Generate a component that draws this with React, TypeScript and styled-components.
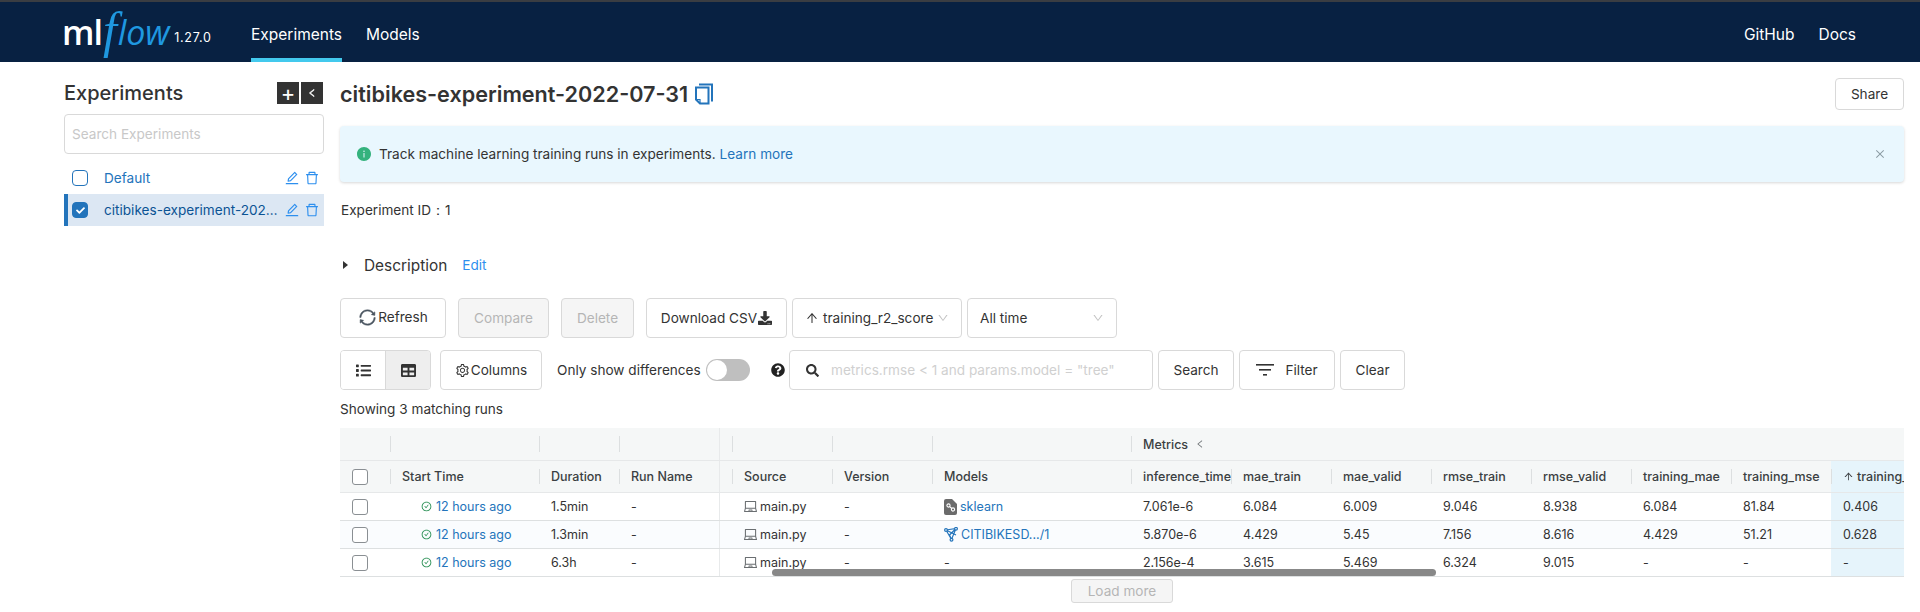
import React from "react";
import styled, { createGlobalStyle } from "styled-components";
import {
  AiFillInfoCircle,
  AiOutlineCheckCircle,
  AiOutlineClose,
  AiOutlineDelete,
  AiOutlineDown,
  AiOutlineEdit,
  AiOutlineLaptop,
  AiOutlineSetting,
  AiOutlineArrowUp,
  AiOutlineLeft,
  AiOutlineSync,
} from "react-icons/ai";
import { FaDownload, FaList, FaQuestionCircle, FaSearch, FaTable, FaCheck } from "react-icons/fa";

const Global = createGlobalStyle`
  html, body { margin: 0; padding: 0; height: 612px; overflow: hidden; background: #fff; }
  body { font-family: Inter, "Liberation Sans", sans-serif; font-size: 13.6px; color: #333; }
  * { box-sizing: border-box; }
`;

const Page = styled.div`
  width: 1920px;
  height: 612px;
  display: flex;
  flex-direction: column;
  overflow: hidden;
`;

const Header = styled.header`
  flex: none;
  height: 62px;
  background: #082142;
  border-top: 2px solid #3a3d42;
  display: flex;
  padding: 0 64px;
  color: #fff;
`;

const Logo = styled.div`
  display: flex;
  align-items: center;
  width: 189px;
  margin-left: -2px;
`;

const LogoMl = styled.span`
  font-family: "Open Sans", sans-serif;
  font-size: 34px;
  font-weight: 600;
  letter-spacing: -1px;
  line-height: 1;
`;

const LogoFlow = styled.span`
  font-family: "Open Sans", sans-serif;
  font-size: 34px;
  font-style: italic;
  font-weight: 500;
  color: #1f98e0;
  line-height: 1;
  letter-spacing: -0.2px;
`;

const LogoF = styled.span`
  font-family: "Liberation Serif", serif;
  font-size: 50px;
  font-style: italic;
  font-weight: 400;
  color: #1f98e0;
  line-height: 1;
  margin: -4px 1px 0 1px;
`;

const Version = styled.span`
  font-size: 12.5px;
  letter-spacing: 0.7px;
  margin: 11px 0 0 5px;
`;

const NavLink = styled.a<{ $active?: boolean; $last?: boolean }>`
  display: flex;
  align-items: center;
  height: 60px;
  font-size: 15.5px;
  padding-top: 8px;
  color: #fff;
  border-bottom: 4px solid ${(p) => (p.$active ? "#43c9ed" : "transparent")};
  margin-right: ${(p) => (p.$last ? 0 : 24)}px;
`;

const Spacer = styled.div`
  flex: 1;
`;

const Body = styled.div`
  flex: 1;
  display: flex;
  padding: 16px 16px 0 64px;
  gap: 16px;
  min-height: 0;
`;

const Sidebar = styled.aside`
  flex: none;
  width: 260px;
`;

const SideHead = styled.div`
  display: flex;
  align-items: center;
  height: 28px;
  margin-top: 1px;
  margin-bottom: 7px;
`;

const SideTitle = styled.div`
  flex: 1;
  font-size: 20px;
  font-weight: 500;
  color: #333;
`;

const SquareBtn = styled.div`
  width: 22px;
  height: 22px;
  background: #333;
  color: #fff;
  display: flex;
  align-items: center;
  justify-content: center;
  margin-left: 2px;
  font-size: 22px;
  line-height: 1;
  &:last-child { margin-right: 1px; }
`;

const SideSearch = styled.div`
  height: 40px;
  border: 1px solid #d9d9d9;
  border-radius: 4px;
  display: flex;
  align-items: center;
  padding: 0 7px;
  color: #c8c8c8;
  margin-bottom: 8px;
`;

const ExpRow = styled.div<{ $selected?: boolean }>`
  height: 32px;
  display: flex;
  align-items: center;
  padding-left: ${(p) => (p.$selected ? "4px" : "8px")};
  background: ${(p) => (p.$selected ? "#dce7f3" : "transparent")};
  border-left: ${(p) => (p.$selected ? "4px solid #2374bb" : "0")};
  color: ${(p) => (p.$selected ? "#0b5394" : "#2374bb")};
`;

const ExpCheck = styled.span<{ $checked?: boolean }>`
  flex: none;
  width: 16px;
  height: 16px;
  border-radius: 4px;
  border: 1px solid #2374bb;
  background: ${(p) => (p.$checked ? "#2374bb" : "#fff")};
  color: #fff;
  display: flex;
  align-items: center;
  justify-content: center;
  font-size: 9px;
`;

const ExpName = styled.span`
  flex: none;
  width: 177px;
  margin-left: 16px;
  white-space: nowrap;
  overflow: hidden;
  text-overflow: ellipsis;
`;

const ExpIcons = styled.span`
  display: flex;
  align-items: center;
  gap: 4px;
  margin-left: 3px;
  font-size: 16px;
  color: #2d8fee;
`;

const Main = styled.main`
  flex: 1;
  min-width: 0;
`;

const TitleRow = styled.div`
  display: flex;
  align-items: center;
  height: 32px;
`;

const Title = styled.h1`
  margin: 0;
  font-size: 21.6px;
  font-weight: 600;
  color: #333;
  white-space: nowrap;
`;

const CopyIcon = styled.svg`
  width: 20px;
  height: 22px;
  margin-left: 6px;
  flex: none;
`;

const Btn = styled.div<{ $disabled?: boolean; $w: number; $ml?: number }>`
  flex: none;
  width: ${(p) => p.$w}px;
  margin-left: ${(p) => p.$ml ?? 0}px;
  height: 40px;
  border: 1px solid #d9d9d9;
  border-radius: 4px;
  background: ${(p) => (p.$disabled ? "#f5f5f5" : "#fff")};
  color: ${(p) => (p.$disabled ? "#b5b5b5" : "#333")};
  display: flex;
  align-items: center;
  justify-content: center;
  gap: 1px;
  white-space: nowrap;
`;

const ShareBtn = styled(Btn)`
  height: 32px;
  margin-left: auto;
`;

const RefreshBtn = styled(Btn)`
  gap: 1px;
  padding-bottom: 2px;
  svg { color: #4a5560; stroke: currentColor; stroke-width: 24; }
`;

const Alert = styled.div`
  height: 56px;
  margin-top: 16px;
  background: #e9f7fe;
  border-radius: 4px;
  box-shadow: 0 1px 3px rgba(0, 0, 0, 0.16);
  display: flex;
  align-items: center;
  padding: 0 18px 0 16px;
  color: #333;
`;

const AlertIcon = styled.span`
  display: flex;
  font-size: 16px;
  color: #34b27d;
  margin-right: 7px;
`;

const Link = styled.a`
  color: #2374bb;
`;

const AlertLink = styled(Link)`
  margin-left: 4px;
`;

const AlertClose = styled.span`
  margin-left: auto;
  display: flex;
  color: #8a9aa3;
  font-size: 12px;
`;

const ExpId = styled.div`
  margin-top: 18px;
  line-height: 20px;
  padding-left: 1px;
`;

const DescRow = styled.div`
  display: flex;
  align-items: center;
  height: 24px;
  margin-top: 33px;
  padding-left: 3px;
`;

const Caret = styled.span`
  width: 0;
  height: 0;
  border-left: 5px solid #333;
  border-top: 4px solid transparent;
  border-bottom: 4px solid transparent;
`;

const DescText = styled.span`
  font-size: 15.4px;
  margin-left: 16px;
`;

const DescEdit = styled.span`
  color: #2d8fee;
  margin-left: 15px;
`;

const Toolbar = styled.div<{ $top: number }>`
  display: flex;
  align-items: center;
  margin-top: ${(p) => p.$top}px;
`;

const Select = styled.div<{ $w: number; $ml: number }>`
  flex: none;
  width: ${(p) => p.$w}px;
  margin-left: ${(p) => p.$ml}px;
  height: 40px;
  border: 1px solid #d9d9d9;
  border-radius: 4px;
  display: flex;
  align-items: center;
  padding: 0 12px;
  gap: 4px;
  white-space: nowrap;
`;

const SelectValue = styled.span`
  flex: 1;
  display: flex;
  align-items: center;
  gap: 4px;
`;

const Chevron = styled.span`
  display: flex;
  font-size: 12px;
  color: #c2c2c2;
`;

const ViewToggle = styled.div`
  flex: none;
  width: 91px;
  height: 40px;
  border: 1px solid #d9d9d9;
  border-radius: 4px;
  display: flex;
  overflow: hidden;
`;

const ViewCell = styled.div<{ $active?: boolean }>`
  flex: 1;
  display: flex;
  align-items: center;
  justify-content: center;
  font-size: 15px;
  background: ${(p) => (p.$active ? "#eee" : "#fff")};
  border-left: ${(p) => (p.$active ? "1px solid #d9d9d9" : "0")};
  color: #333;
`;

const DiffLabel = styled.span`
  white-space: nowrap;
  margin-left: 15px;
  width: 144px;
`;

const Toggle = styled.span`
  flex: none;
  width: 44px;
  height: 22px;
  margin-left: 5px;
  border-radius: 11px;
  background: #bfbfbf;
  display: flex;
  align-items: center;
  padding-left: 1px;
`;

const Knob = styled.span`
  width: 20px;
  height: 20px;
  border-radius: 50%;
  background: #fff;
`;

const HelpIcon = styled.span`
  display: flex;
  font-size: 14px;
  margin-left: 21px;
  color: #222;
`;

const SearchBox = styled.div`
  flex: none;
  width: 364px;
  height: 40px;
  margin-left: 4px;
  margin-right: 5px;
  border: 1px solid #d9d9d9;
  border-radius: 4px;
  display: flex;
  align-items: center;
  padding: 0 16px;
  gap: 12px;
  color: #333;
  font-size: 13px;
`;

const SearchHint = styled.span`
  font-size: 13.6px;
  color: #d0d0d0;
  white-space: nowrap;
`;

const FilterBtn = styled(Btn)`
  gap: 11px;
  margin: 0 5px;
`;

const Count = styled.div`
  margin-top: 9px;
  line-height: 20px;
`;

const Grid = styled.div`
  position: relative;
  margin-top: 9px;
  width: 1564px;
  overflow: hidden;
`;

const GridRow = styled.div<{ $kind: "group" | "head" | "cell"; $alt?: boolean }>`
  display: flex;
  width: 1700px;
  height: ${(p) => (p.$kind === "cell" ? 28 : p.$kind === "group" ? 33 : 32)}px;
  align-items: stretch;
  background: ${(p) => (p.$kind === "cell" ? (p.$alt ? "#fafcfe" : "#fff") : "#f5f7f7")};
  border-bottom: 1px solid ${(p) => (p.$kind === "cell" ? "#dde0e1" : "#e6e8e9")};
  font-size: 12.5px;
  font-weight: ${(p) => (p.$kind === "cell" ? 400 : 500)};
  color: ${(p) => (p.$kind === "cell" ? "#333" : "#3b3f42")};
`;

const Col = styled.div<{ $w: number; $sep?: boolean; $edge?: boolean; $sorted?: boolean }>`
  flex: none;
  position: relative;
  width: ${(p) => p.$w}px;
  display: flex;
  align-items: center;
  padding-left: 12px;
  white-space: nowrap;
  overflow: hidden;
  background: ${(p) => (p.$sorted ? "#e6f4fb" : "transparent")};
  border-right: ${(p) => (p.$edge ? "1px solid #e8eaeb" : "0")};
  &::before {
    content: ${(p) => (p.$sep ? '""' : "none")};
    position: absolute;
    left: 0;
    top: 8px;
    bottom: 8px;
    width: 1px;
    background: #dcdfe0;
  }
`;

const RowCheck = styled.span`
  width: 16px;
  height: 16px;
  border: 1px solid #8a8f93;
  border-radius: 3px;
  background: #fff;
`;

const StartCell = styled.span`
  display: flex;
  align-items: center;
  gap: 4px;
  margin-left: 19px;
  color: #2374bb;
`;

const StatusIcon = styled.span`
  display: flex;
  font-size: 11px;
  color: #1f8a4c;
`;

const SourceCell = styled.span`
  display: flex;
  align-items: center;
  gap: 2px;
  margin-left: -1px;
`;

const LaptopIcon = styled.span`
  display: flex;
  font-size: 15px;
  color: #6a6e71;
`;

const ModelLink = styled.span`
  display: flex;
  align-items: center;
  gap: 3px;
  color: #2374bb;
`;

const GroupLabel = styled.span`
  display: flex;
  align-items: center;
  gap: 7px;
  font-size: 12.5px;
`;

const GroupChevron = styled.span`
  display: flex;
  font-size: 10px;
  color: #6d7275;
`;

const Scrollbar = styled.div`
  position: absolute;
  left: 432px;
  bottom: 1px;
  width: 664px;
  height: 7px;
  border-radius: 4px;
  background: #888;
`;

const LoadRow = styled.div`
  width: 1564px;
  display: flex;
  justify-content: center;
  margin-top: 2px;
`;

const LoadBtn = styled.div`
  width: 102px;
  height: 24px;
  border: 1px solid #d9d9d9;
  border-radius: 3px;
  background: #f5f5f5;
  color: #b5b5b5;
  display: flex;
  align-items: center;
  justify-content: center;
`;

const SortedHead = styled.span`
  display: flex;
  align-items: center;
  gap: 3px;
`;

const CopyGlyph = () => (
  <CopyIcon viewBox="0 0 20 22" fill="none" stroke="#2374bb" strokeWidth="2">
    <path d="M5 1.5h13v17" />
    <path d="M2 4.5h12.5v16H6l-4-4z" />
    <path d="M2 16.5h4v4" strokeWidth="1.2" />
  </CopyIcon>
);

const SklearnIcon = () => (
  <svg width="13" height="16" viewBox="0 0 13 16">
    <path d="M2 0h6l5 5v9a2 2 0 0 1-2 2H2a2 2 0 0 1-2-2V2a2 2 0 0 1 2-2z" fill="#6b6b6b" />
    <g fill="none" stroke="#fff" strokeWidth="1.1">
      <circle cx="4.5" cy="6.5" r="1.6" />
      <circle cx="9" cy="10.5" r="1.6" />
      <path d="M5.7 7.6l2.1 1.9" />
    </g>
  </svg>
);

const RegisteredIcon = () => (
  <svg width="14" height="15" viewBox="0 0 14 15" fill="none" stroke="#2374bb" strokeWidth="1.2">
    <path d="M2 3l10-1.5L7.5 12.5zM2 3l10 5M12 1.5L5.5 8 7.5 12.5" />
    <circle cx="2" cy="3" r="1.4" fill="#fff" />
    <circle cx="12" cy="1.8" r="1.4" fill="#fff" />
    <circle cx="7.5" cy="12.8" r="1.4" fill="#fff" />
  </svg>
);

const FilterGlyph = () => (
  <svg width="18" height="12" viewBox="0 0 18 12" fill="#333">
    <rect x="0" y="0" width="18" height="1.6" />
    <rect x="3" y="5" width="12" height="1.6" />
    <rect x="7" y="10" width="4" height="1.6" />
  </svg>
);

type Column = { key: string; w: number; label: string };

const columns: Column[] = [
  { key: "select", w: 50, label: "" },
  { key: "start", w: 149, label: "Start Time" },
  { key: "duration", w: 80, label: "Duration" },
  { key: "runName", w: 101, label: "Run Name" },
  { key: "gap", w: 10, label: "" },
  { key: "source", w: 100, label: "Source" },
  { key: "version", w: 100, label: "Version" },
  { key: "models", w: 199, label: "Models" },
  { key: "inference", w: 100, label: "inference_time" },
  { key: "maeTrain", w: 100, label: "mae_train" },
  { key: "maeValid", w: 100, label: "mae_valid" },
  { key: "rmseTrain", w: 100, label: "rmse_train" },
  { key: "rmseValid", w: 100, label: "rmse_valid" },
  { key: "trainMae", w: 100, label: "training_mae" },
  { key: "trainMse", w: 100, label: "training_mse" },
];

const runs = [
  { duration: "1.5min", model: "sklearn", kind: "sk", m: ["7.061e-6", "6.084", "6.009", "9.046", "8.938", "6.084", "81.84"], r2: "0.406" },
  { duration: "1.3min", model: "CITIBIKESD.../1", kind: "reg", m: ["5.870e-6", "4.429", "5.45", "7.156", "8.616", "4.429", "51.21"], r2: "0.628" },
  { duration: "6.3h", model: "-", kind: "none", m: ["2.156e-4", "3.615", "5.469", "6.324", "9.015", "-", "-"], r2: "-" },
];

export default function App() {
  return (
    <Page>
      <Global />
      <Header>
        <Logo>
          <LogoMl>ml</LogoMl>
          <LogoF>f</LogoF>
          <LogoFlow>low</LogoFlow>
          <Version>1.27.0</Version>
        </Logo>
        <NavLink $active>Experiments</NavLink>
        <NavLink>Models</NavLink>
        <Spacer />
        <NavLink>GitHub</NavLink>
        <NavLink $last>Docs</NavLink>
      </Header>
      <Body>
        <Sidebar>
          <SideHead>
            <SideTitle>Experiments</SideTitle>
            <SquareBtn>+</SquareBtn>
            <SquareBtn>
              <AiOutlineLeft size={10} strokeWidth={60} />
            </SquareBtn>
          </SideHead>
          <SideSearch>Search Experiments</SideSearch>
          <ExpRow>
            <ExpCheck />
            <ExpName>Default</ExpName>
            <ExpIcons>
              <AiOutlineEdit />
              <AiOutlineDelete />
            </ExpIcons>
          </ExpRow>
          <ExpRow $selected>
            <ExpCheck $checked>
              <FaCheck />
            </ExpCheck>
            <ExpName>citibikes-experiment-2022-07-31</ExpName>
            <ExpIcons>
              <AiOutlineEdit />
              <AiOutlineDelete />
            </ExpIcons>
          </ExpRow>
        </Sidebar>
        <Main>
          <TitleRow>
            <Title>citibikes-experiment-2022-07-31</Title>
            <CopyGlyph />
            <ShareBtn $w={69}>Share</ShareBtn>
          </TitleRow>
          <Alert>
            <AlertIcon>
              <AiFillInfoCircle />
            </AlertIcon>
            Track machine learning training runs in experiments.
            <AlertLink>Learn more</AlertLink>
            <AlertClose>
              <AiOutlineClose />
            </AlertClose>
          </Alert>
          <ExpId>Experiment ID：1</ExpId>
          <DescRow>
            <Caret />
            <DescText>Description</DescText>
            <DescEdit>Edit</DescEdit>
          </DescRow>
          <Toolbar $top={21}>
            <RefreshBtn $w={106}>
              <AiOutlineSync size={19} />
              Refresh
            </RefreshBtn>
            <Btn $w={91} $disabled $ml={12}>
              Compare
            </Btn>
            <Btn $w={73} $disabled $ml={12}>
              Delete
            </Btn>
            <Btn $w={141} $ml={12}>
              Download CSV
              <FaDownload size={14} />
            </Btn>
            <Select $w={170} $ml={5}>
              <SelectValue>
                <AiOutlineArrowUp size={14} />
                training_r2_score
              </SelectValue>
              <Chevron>
                <AiOutlineDown />
              </Chevron>
            </Select>
            <Select $w={150} $ml={5}>
              <SelectValue>All time</SelectValue>
              <Chevron>
                <AiOutlineDown />
              </Chevron>
            </Select>
          </Toolbar>
          <Toolbar $top={12}>
            <ViewToggle>
              <ViewCell>
                <FaList />
              </ViewCell>
              <ViewCell $active>
                <FaTable />
              </ViewCell>
            </ViewToggle>
            <Btn $w={102} $ml={9}>
              <AiOutlineSetting size={15} />
              Columns
            </Btn>
            <DiffLabel>Only show differences</DiffLabel>
            <Toggle>
              <Knob />
            </Toggle>
            <HelpIcon>
              <FaQuestionCircle />
            </HelpIcon>
            <SearchBox>
              <FaSearch />
              <SearchHint>metrics.rmse &lt; 1 and params.model = "tree"</SearchHint>
            </SearchBox>
            <Btn $w={76}>Search</Btn>
            <FilterBtn $w={96}>
              <FilterGlyph />
              Filter
            </FilterBtn>
            <Btn $w={65}>Clear</Btn>
          </Toolbar>
          <Count>Showing 3 matching runs</Count>
          <Grid>
            <GridRow $kind="group">
              {columns.slice(0, 8).map((c, i) => (
                <Col key={c.key} $w={c.w} $sep={i > 0 && c.key !== "gap"} $edge={c.key === "runName"} />
              ))}
              <Col $w={800} $sep>
                <GroupLabel>
                  Metrics
                  <GroupChevron>
                    <AiOutlineLeft />
                  </GroupChevron>
                </GroupLabel>
              </Col>
            </GridRow>
            <GridRow $kind="head">
              {columns.map((c, i) => (
                <Col key={c.key} $w={c.w} $sep={i > 0 && c.key !== "gap"} $edge={c.key === "runName"}>
                  {c.key === "select" ? <RowCheck /> : c.label}
                </Col>
              ))}
              <Col $w={160} $sep $sorted>
                <SortedHead>
                  <AiOutlineArrowUp size={11} />
                  training_r2_score
                </SortedHead>
              </Col>
            </GridRow>
            {runs.map((r, ri) => (
              <GridRow key={ri} $kind="cell" $alt={ri === 1}>
                <Col $w={50}>
                  <RowCheck />
                </Col>
                <Col $w={149}>
                  <StartCell>
                    <StatusIcon>
                      <AiOutlineCheckCircle />
                    </StatusIcon>
                    12 hours ago
                  </StartCell>
                </Col>
                <Col $w={80}>{r.duration}</Col>
                <Col $w={101} $edge>
                  -
                </Col>
                <Col $w={10} />
                <Col $w={100}>
                  <SourceCell>
                    <LaptopIcon>
                      <AiOutlineLaptop />
                    </LaptopIcon>
                    main.py
                  </SourceCell>
                </Col>
                <Col $w={100}>-</Col>
                <Col $w={199}>
                  {r.kind === "none" ? (
                    "-"
                  ) : (
                    <ModelLink>
                      {r.kind === "sk" ? <SklearnIcon /> : <RegisteredIcon />}
                      {r.model}
                    </ModelLink>
                  )}
                </Col>
                {r.m.map((v, i) => (
                  <Col key={i} $w={columns[8 + i].w}>
                    {v}
                  </Col>
                ))}
                <Col $w={160} $sorted>
                  {r.r2}
                </Col>
              </GridRow>
            ))}
            <Scrollbar />
          </Grid>
          <LoadRow>
            <LoadBtn>Load more</LoadBtn>
          </LoadRow>
        </Main>
      </Body>
    </Page>
  );
}
